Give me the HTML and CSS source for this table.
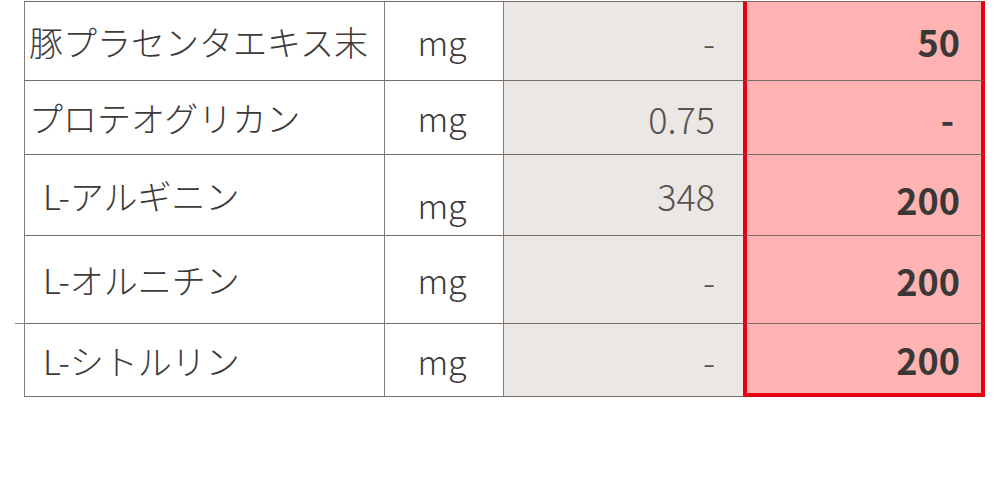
FILE: index.html
```html
<!DOCTYPE html>
<html lang="ja">
<head>
<meta charset="utf-8">
<link rel="stylesheet" href="styles.css">
</head>
<body>
<table class="spec">
  <tr class="r1">
    <td class="name">豚プラセンタエキス末</td>
    <td class="unit">mg</td>
    <td class="old">-</td>
    <td class="new">50</td>
  </tr>
  <tr class="r2">
    <td class="name">プロテオグリカン</td>
    <td class="unit">mg</td>
    <td class="old">0.75</td>
    <td class="new dash">-</td>
  </tr>
  <tr class="r3">
    <td class="name indent">L-アルギニン</td>
    <td class="unit low">mg</td>
    <td class="old">348</td>
    <td class="new low-s">200</td>
  </tr>
  <tr class="r4">
    <td class="name indent rule">L-オルニチン</td>
    <td class="unit">mg</td>
    <td class="old">-</td>
    <td class="new">200</td>
  </tr>
  <tr class="r5">
    <td class="name indent">L-シトルリン</td>
    <td class="unit">mg</td>
    <td class="old">-</td>
    <td class="new last">200</td>
  </tr>
</table>
</body>
</html>
```
FILE: styles.css
```css
html, body {
  margin: 0;
  padding: 0;
  background: #ffffff;
}

body {
  font-family: "Noto Sans CJK JP", "Noto Sans", sans-serif;
  color: #3d3a39;
}

.spec {
  margin: 1px 0 0 24px;
  border-collapse: separate;
  border-spacing: 0;
  table-layout: fixed;
  width: 961px;
}

.spec td {
  box-sizing: border-box;
  padding: 0;
  border-bottom: 1px solid #746c68;
  border-left: 1px solid #857e7a;
  vertical-align: middle;
  white-space: nowrap;
}

.r1 td {
  border-top: 1px solid #746c68;
}

.r1 { height: 80px; }
.r2 { height: 74px; }
.r3 { height: 81px; }
.r4 { height: 88px; }
.r5 { height: 73px; }

.name {
  width: 360px;
  padding-left: 4px !important;
  font-size: 34px;
  font-weight: 300;
  color: #3d3a39;
}

.name.indent {
  padding-left: 18px !important;
}

.name.rule {
  position: relative;
}

.name.rule::after {
  content: "";
  position: absolute;
  left: -10px;
  bottom: -1px;
  width: 10px;
  height: 1px;
  background: #8f8884;
}

.unit {
  width: 119px;
  text-align: center;
  font-size: 34px;
  font-weight: 300;
  color: #3d3a39;
  padding-right: 4px !important;
}

.unit.low {
  padding-top: 18px !important;
}

.old {
  width: 240px;
  background: #ebe7e4;
  text-align: right;
  padding-right: 28px !important;
  font-size: 36px;
  font-weight: 300;
  color: #57524f;
}

.new {
  width: 242px;
  background: #ffb3b3;
  border-left: 4px solid #e50014 !important;
  border-right: 4px solid #e50014;
  text-align: right;
  padding-right: 21px !important;
  font-size: 36px;
  font-weight: 700;
  color: #3a3837;
}

.new.dash {
  padding-right: 27px !important;
}

.new.low-s {
  padding-top: 8px !important;
}

.new.last {
  border-bottom: 4px solid #e50014;
}
```
